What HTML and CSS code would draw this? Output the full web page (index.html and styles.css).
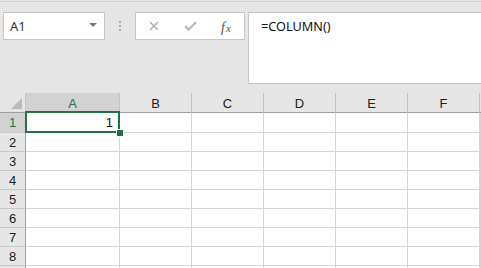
FILE: index.html
```html
<!DOCTYPE html>
<html>
<head>
<meta charset="utf-8">
<link rel="stylesheet" href="styles.css">
</head>
<body>
<div class="formula-bar">
  <div class="name-box">
    <span class="name-text">A1</span>
    <span class="caret"></span>
  </div>
  <div class="sep"><i></i><i></i><i></i></div>
  <div class="fx-box">
    <svg class="ic-x" width="10" height="10" viewBox="0 0 10 10"><path d="M1 1L9 9M9 1L1 9" stroke="#a8a8a8" stroke-width="1.3" fill="none"/></svg>
    <svg class="ic-ok" width="13" height="10" viewBox="0 0 13 10"><path d="M1 5.2L4.6 8.6L12 1.2" stroke="#b4b4b4" stroke-width="2" fill="none"/></svg>
    <span class="fx"><span class="fx-f">f</span><span class="fx-x">x</span></span>
  </div>
  <div class="formula-input">=COLUMN()</div>
</div>
<div class="sheet">
  <div class="corner"><span class="tri"></span></div>
  <div class="ch sel-h">A</div>
  <div class="ch">B</div>
  <div class="ch">C</div>
  <div class="ch">D</div>
  <div class="ch">E</div>
  <div class="ch">F</div>
  <div class="ch ch-last"></div>

  <div class="rh sel-h">1</div>
  <div class="cell active"><span class="val">1</span><span class="sel"><span class="handle"></span></span></div>
  <div class="cell"></div><div class="cell"></div><div class="cell"></div><div class="cell"></div><div class="cell"></div><div class="cell"></div>

  <div class="rh">2</div>
  <div class="cell"></div><div class="cell"></div><div class="cell"></div><div class="cell"></div><div class="cell"></div><div class="cell"></div><div class="cell"></div>
  <div class="rh">3</div>
  <div class="cell"></div><div class="cell"></div><div class="cell"></div><div class="cell"></div><div class="cell"></div><div class="cell"></div><div class="cell"></div>
  <div class="rh">4</div>
  <div class="cell"></div><div class="cell"></div><div class="cell"></div><div class="cell"></div><div class="cell"></div><div class="cell"></div><div class="cell"></div>
  <div class="rh">5</div>
  <div class="cell"></div><div class="cell"></div><div class="cell"></div><div class="cell"></div><div class="cell"></div><div class="cell"></div><div class="cell"></div>
  <div class="rh">6</div>
  <div class="cell"></div><div class="cell"></div><div class="cell"></div><div class="cell"></div><div class="cell"></div><div class="cell"></div><div class="cell"></div>
  <div class="rh">7</div>
  <div class="cell"></div><div class="cell"></div><div class="cell"></div><div class="cell"></div><div class="cell"></div><div class="cell"></div><div class="cell"></div>
  <div class="rh">8</div>
  <div class="cell"></div><div class="cell"></div><div class="cell"></div><div class="cell"></div><div class="cell"></div><div class="cell"></div><div class="cell"></div>
  <div class="rh"></div>
  <div class="cell"></div><div class="cell"></div><div class="cell"></div><div class="cell"></div><div class="cell"></div><div class="cell"></div><div class="cell"></div>
</div>
</body>
</html>
```

FILE: styles.css
```css
html, body {
  margin: 0;
  padding: 0;
  background: #e6e6e6;
  overflow: hidden;
  width: 481px;
  height: 268px;
}
body {
  font-family: "Liberation Sans", Arial, sans-serif;
  color: #222;
}
.formula-bar {
  margin-top: 1px;
  border-top: 1px solid #d4d4d4;
  height: 92px;
  box-sizing: border-box;
  padding: 10px 0 0 3px;
  display: flex;
  align-items: flex-start;
}
.name-box {
  width: 102px;
  height: 28px;
  box-sizing: border-box;
  border: 1px solid #c6c6c6;
  background: #fff;
  display: flex;
  align-items: center;
  justify-content: space-between;
  padding: 0 7px 0 6px;
}
.name-text {
  font-family: "Noto Sans", "Open Sans", sans-serif;
  font-size: 13px;
  color: #333;
  line-height: 16px;
}
.caret {
  width: 0;
  height: 0;
  border-left: 4px solid transparent;
  border-right: 4px solid transparent;
  border-top: 4px solid #7b7b7b;
  margin-top: -2px;
}
.sep {
  width: 30px;
  height: 28px;
  display: flex;
  flex-direction: column;
  align-items: center;
  justify-content: center;
  gap: 2px;
}
.sep i {
  display: block;
  width: 2px;
  height: 2px;
  background: #b3b3b3;
}
.fx-box {
  width: 110px;
  height: 28px;
  box-sizing: border-box;
  border: 1px solid #c6c6c6;
  background: #fff;
  display: flex;
  align-items: center;
}
.ic-x {
  margin-left: 13px;
}
.ic-ok {
  margin-left: 25px;
}
.fx {
  margin-left: 24px;
  font-family: "Liberation Serif", "Times New Roman", serif;
  font-style: italic;
  color: #555;
  font-size: 14px;
  line-height: 14px;
  display: flex;
  align-items: flex-end;
}
.fx-x {
  font-size: 11px;
  margin-left: 1px;
  margin-top: 3px;
}
.formula-input {
  flex: 1;
  margin-left: 3px;
  height: 72px;
  box-sizing: border-box;
  border: 1px solid #c6c6c6;
  border-right: none;
  background: #fff;
  padding: 5px 12px;
  font-family: "Noto Sans", "Open Sans", sans-serif;
  font-size: 12.7px;
  line-height: 17px;
  color: #111;
}
.sheet {
  display: grid;
  grid-template-columns: 26px 94px 72px 72px 72px 72px 72px 1fr;
  grid-template-rows: 20px 20px repeat(8, 19px);
  background: #fff;
  font-size: 13px;
}
.corner {
  background: #e6e6e6;
  border-right: 1px solid #c6c6c6;
  border-bottom: 1px solid #9f9f9f;
  box-sizing: border-box;
  position: relative;
}
.tri {
  position: absolute;
  right: 3px;
  bottom: 3px;
  width: 0;
  height: 0;
  border-left: 11px solid transparent;
  border-bottom: 11px solid #b9b9b9;
}
.ch {
  background: #e6e6e6;
  border-right: 1px solid #c3c3c3;
  border-bottom: 1px solid #9f9f9f;
  box-sizing: border-box;
  text-align: center;
  line-height: 17px;
  padding-top: 2px;
  color: #222;
}
.ch-last {
  border-right: none;
}
.rh {
  background: #e6e6e6;
  border-right: 1px solid #9f9f9f;
  border-bottom: 1px solid #c8c8c8;
  box-sizing: border-box;
  text-align: center;
  line-height: 17px;
  padding-top: 1px;
  color: #222;
}
.sel-h {
  background: #d2d2d2;
  color: #217346;
}
.cell {
  border-right: 1px solid #d4d4d4;
  border-bottom: 1px solid #d4d4d4;
  box-sizing: border-box;
  line-height: 17px;
  padding-top: 1px;
}
.active {
  position: relative;
  text-align: right;
  padding-right: 6px;
  color: #111;
}
.sel {
  position: absolute;
  left: -1px;
  top: -2px;
  right: -1px;
  bottom: -1px;
  border: 2px solid #217346;
  z-index: 2;
}
.handle {
  position: absolute;
  right: -5px;
  bottom: -5px;
  width: 6px;
  height: 6px;
  background: #217346;
  box-shadow: 0 0 0 1px #fff;
}
```
